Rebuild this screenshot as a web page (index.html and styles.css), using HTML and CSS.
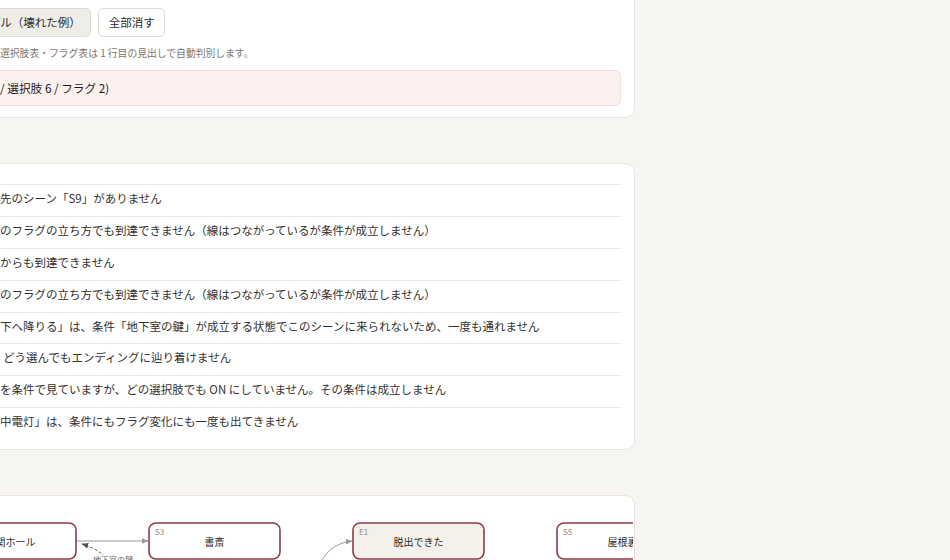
FILE: index.html
```html
<!DOCTYPE html>
<html lang="ja">
<head>
<meta charset="utf-8">
<title>シナリオ検査</title>
<link rel="stylesheet" href="styles.css">
</head>
<body>
<main class="page">
  <section class="card card-input">
    <div class="toolbar">
      <label class="btn btn-file">CSV ファイルを開く</label>
      <button class="btn">サンプル（正しい例）</button>
      <button class="btn btn-muted">サンプル（壊れた例）</button>
      <button class="btn">全部消す</button>
    </div>
    <p class="hint"><span class="lead">シーン表・</span><span class="rest">選択肢表・フラグ表は 1 行目の見出しで自動判別します。</span></p>
    <div class="status"><span class="lead lead-box">読み込み完了（シーン 8 </span><span class="rest">/ 選択肢 6 / フラグ 2)</span></div>
  </section>

  <h2 class="section-title">チェック結果</h2>

  <section class="card card-results">
    <div class="card-head">問題 8 件</div>
    <ul class="issues">
      <li><span class="lead">シーン「S4」の選択肢「窓を開ける」の行き</span><span class="rest">先のシーン「S9」がありません</span></li>
      <li><span class="lead">エンディング「E2」はどの選択肢</span><span class="rest">のフラグの立ち方でも到達できません（線はつながっているが条件が成立しません）</span></li>
      <li><span class="lead">シーン「S6」はスタート</span><span class="rest">からも到達できません</span></li>
      <li><span class="lead">シーン「S7」はどの選択肢</span><span class="rest">のフラグの立ち方でも到達できません（線はつながっているが条件が成立しません）</span></li>
      <li><span class="lead">選択肢「地</span><span class="rest">下へ降りる」は、条件「地下室の鍵」が成立する状態でこのシーンに来られないため、一度も通れません</span></li>
      <li><span class="lead">シーン「S5」からは</span><span class="rest rest-gap">どう選んでもエンディングに辿り着けません</span></li>
      <li><span class="lead">フラグ「地下室の鍵」</span><span class="rest">を条件で見ていますが、どの選択肢でも ON にしていません。その条件は成立しません</span></li>
      <li><span class="lead">フラグ「懐</span><span class="rest">中電灯」は、条件にもフラグ変化にも一度も出てきません</span></li>
    </ul>
  </section>

  <h2 class="section-title">フローチャート</h2>

  <section class="card card-graph">
    <svg class="graph" width="998" height="140" viewBox="0 0 998 140" xmlns="http://www.w3.org/2000/svg">
      <defs>
        <marker id="arr" viewBox="0 0 10 10" refX="9" refY="5" markerWidth="7" markerHeight="7" orient="auto">
          <path d="M0 1 L10 5 L0 9 Z" fill="#9a9a9a"/>
        </marker>
        <marker id="arrd" viewBox="0 0 10 10" refX="9" refY="5" markerWidth="7" markerHeight="7" orient="auto">
          <path d="M0 1 L10 5 L0 9 Z" fill="#555"/>
        </marker>
      </defs>

      <!-- edges -->
      <line x1="441" y1="45" x2="513" y2="45" class="edge" marker-end="url(#arr)"/>
      <path d="M480 72 Q468 54 447 48" class="edge-dash" marker-end="url(#arrd)"/>
      <text x="478" y="63" class="edge-label">地下室の鍵</text>
      <path d="M684 70 C690 56 700 47 717 45" class="edge" marker-end="url(#arr)"/>
      <line x1="987" y1="63" x2="987" y2="90" class="edge"/>

      <!-- nodes -->
      <g class="node">
        <rect x="310" y="27" width="131" height="36" rx="7"/>
        <text x="316" y="35" class="node-id">S1</text>
        <text x="375.5" y="45" class="node-name">玄関ホール</text>
      </g>
      <g class="node">
        <rect x="514" y="27" width="131" height="36" rx="7"/>
        <text x="520" y="35" class="node-id">S3</text>
        <text x="579.5" y="45" class="node-name">書斎</text>
      </g>
      <g class="node node-end">
        <rect x="718" y="27" width="131" height="36" rx="7"/>
        <text x="724" y="35" class="node-id">E1</text>
        <text x="783.5" y="45" class="node-name">脱出できた</text>
      </g>
      <g class="node">
        <rect x="922" y="27" width="131" height="36" rx="7"/>
        <text x="928" y="35" class="node-id">S5</text>
        <text x="987.5" y="45" class="node-name">屋根裏</text>
      </g>
    </svg>
  </section>
</main>
</body>
</html>
```

FILE: styles.css
```css
html, body {
  margin: 0;
  padding: 0;
}

body {
  background: #f6f5f1;
  font-family: "Noto Sans CJK JP", "Noto Sans", sans-serif;
  color: #2d2b29;
  overflow: hidden;
}

.page {
  width: 1001px;
  margin: -20px 0 0 -366px;
}

.card {
  background: #fff;
  border: 1px solid #e8e5df;
  border-radius: 10px;
}

.card-input {
  padding: 27px 13px 11px;
}

.toolbar {
  display: flex;
  gap: 7px;
}

.btn {
  height: 29px;
  box-sizing: border-box;
  padding: 0 9.5px;
  border: 1px solid #dedad3;
  border-radius: 5px;
  background: #fff;
  color: #2d2b29;
  font-family: inherit;
  font-size: 11.5px;
  line-height: 27px;
  white-space: nowrap;
}

.btn-file {
  width: 158px;
  text-align: center;
}

.btn-muted {
  background: #efede8;
}

.hint {
  display: flex;
  margin: 8px 0 0;
  font-size: 9.8px;
  line-height: 16px;
  color: #7a7670;
}

.lead {
  flex: 0 0 352px;
  overflow: hidden;
  text-align: right;
  white-space: nowrap;
}

.lead-box {
  flex-basis: 339px;
}

.rest {
  white-space: nowrap;
}

.rest-gap {
  padding-left: 3px;
}

.status {
  display: flex;
  margin-top: 9px;
  height: 36px;
  box-sizing: border-box;
  padding: 0 12px;
  background: #fcf0ef;
  border: 1px solid #f2dfdc;
  border-radius: 6px;
  font-size: 11.7px;
  line-height: 33px;
  font-weight: 400;
  color: #1f1d1b;
}

.section-title {
  margin: 0;
  height: 45px;
  line-height: 45px;
  font-size: 13px;
  font-weight: 600;
  color: #2d2b29;
}

.card-results {
  padding: 0 13px 10px;
}

.card-head {
  height: 20px;
  line-height: 20px;
  font-size: 10px;
  color: #7a7670;
}

.issues {
  list-style: none;
  margin: 0;
  padding: 0;
}

.issues li {
  display: flex;
  height: 31.875px;
  box-sizing: border-box;
  border-top: 1px solid #e9e6e1;
  padding-top: 5px;
  font-size: 11.5px;
  line-height: 17px;
  color: #33312e;
}

.card-graph {
  overflow: hidden;
  height: 140px;
}

.graph {
  display: block;
}

.edge {
  fill: none;
  stroke: #9a9a9a;
  stroke-width: 1;
}

.edge-dash {
  fill: none;
  stroke: #555;
  stroke-width: 1;
  stroke-dasharray: 3 2;
}

.edge-label {
  font-size: 8px;
  fill: #666;
  text-anchor: middle;
  dominant-baseline: central;
  paint-order: stroke;
  stroke: #fff;
  stroke-width: 3px;
}

.node rect {
  fill: #fff;
  stroke: #8f3a46;
  stroke-width: 1.6;
}

.node-end rect {
  fill: #f4f0ea;
}

.node-id {
  font-size: 8px;
  fill: #8a8a8a;
  dominant-baseline: central;
}

.node-name {
  font-size: 10px;
  fill: #2d2b29;
  text-anchor: middle;
  dominant-baseline: central;
}
```
